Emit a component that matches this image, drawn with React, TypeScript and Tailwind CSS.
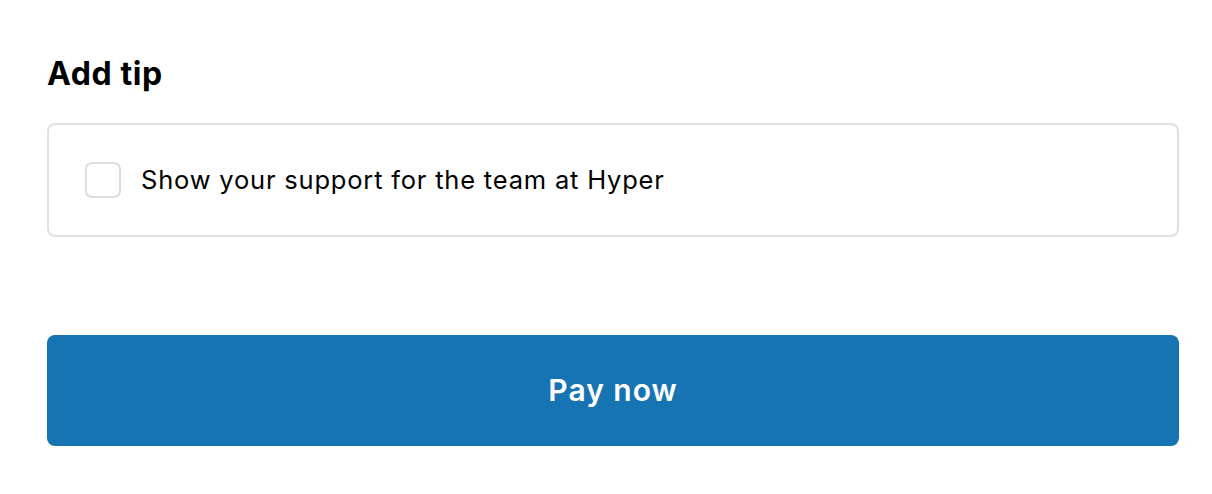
export default function App() {
  return (
    <div className="min-h-[494px] w-full bg-white pt-[54px] pl-[47px] pr-[33px] font-['Inter',sans-serif] text-black">
      <h2 className="text-[32px] font-bold leading-[40px] tracking-[0.6px]">Add tip</h2>
      <label className="mt-[29px] flex h-[114px] items-center gap-[20px] rounded-[8px] border-2 border-[#e1e1e1] px-[36px]">
        <span className="h-[36px] w-[36px] shrink-0 rounded-[7px] border-2 border-[#dddddd] bg-white" />
        <span className="text-[25.5px] leading-[32px] tracking-[0.8px]">Show your support for the team at Hyper</span>
      </label>
      <button className="mt-[98px] flex h-[111px] w-full items-center justify-center rounded-[8px] bg-[#1774b3] text-[30px] font-semibold tracking-[1px] text-white">
        Pay now
      </button>
    </div>
  );
}
